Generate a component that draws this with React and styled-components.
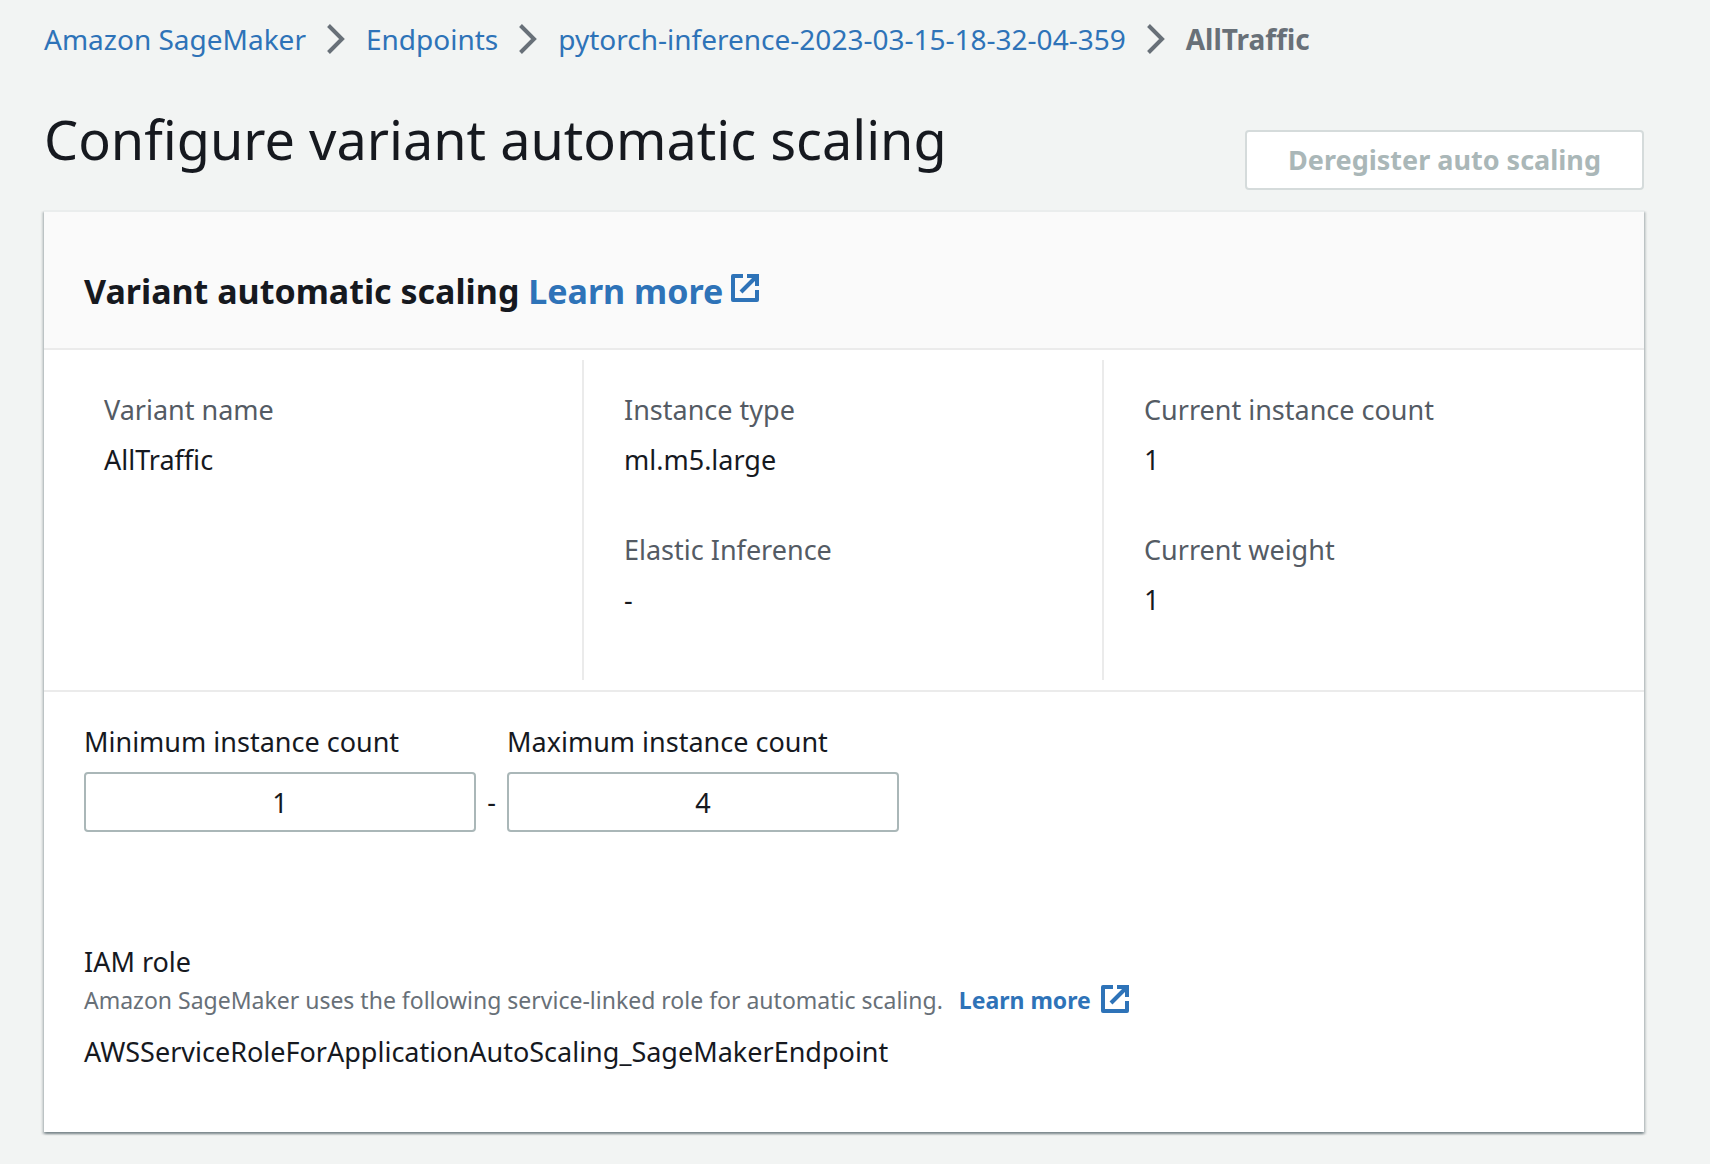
import React, { useState } from "react";
import styled, { createGlobalStyle } from "styled-components";

const GlobalStyle = createGlobalStyle`
  *, *::before, *::after { box-sizing: border-box; }
  body {
    margin: 0;
    background: #f2f4f3;
    color: #16191f;
    font-family: "Noto Sans", "Open Sans", sans-serif;
    font-size: 27px;
    line-height: 44px;
  }
`;

const Page = styled.main`
  padding: 17px 66px 32px 44px;
`;

const Trail = styled.ol`
  display: flex;
  flex-wrap: wrap;
  align-items: center;
  margin: 0;
  padding: 0;
  list-style: none;
  font-size: 28px;
`;

const Crumb = styled.li`
  display: flex;
  align-items: center;
  color: #687078;
  font-weight: ${(p) => (p.$current ? 700 : 400)};
`;

const Link = styled.a`
  color: #2e73b8;
  font-weight: ${(p) => (p.$strong ? 700 : 400)};
  text-decoration: none;
  &:hover { text-decoration: underline; }
`;

const Chevron = styled.svg`
  width: 18px;
  height: 30px;
  margin: 0 21px;
  flex: none;
`;

const TitleRow = styled.header`
  display: flex;
  justify-content: space-between;
  align-items: flex-end;
  padding: 43px 0 20px;
`;

const Title = styled.h1`
  margin: 0 0 16px;
  font-size: 54px;
  font-weight: 400;
  line-height: 70px;
`;

const Button = styled.button`
  height: 60px;
  padding: 0 41px;
  border: 2px solid #d5dbdb;
  border-radius: 4px;
  background: #fff;
  color: #aab7b8;
  font: inherit;
  font-weight: 700;
`;

const Card = styled.section`
  background: #fff;
  border-top: 2px solid #eaeded;
  box-shadow:
    0 2px 2px rgba(0, 28, 36, 0.3),
    2px 2px 2px rgba(0, 28, 36, 0.15),
    -2px 2px 2px rgba(0, 28, 36, 0.15);
`;

const CardHeader = styled.div`
  padding: 54px 40px 32px;
  background: #fafafa;
  border-bottom: 2px solid #ebebeb;
`;

const CardTitle = styled.h2`
  margin: 0;
  font-size: 34px;
  font-weight: 700;
  line-height: 50px;
`;

const ExternalIcon = styled.svg`
  width: 28px;
  height: 28px;
  margin-left: ${(p) => p.$gap}px;
  vertical-align: ${(p) => p.$drop}px;
`;

const Columns = styled.div`
  display: grid;
  grid-template-columns: repeat(3, 1fr);
  padding: 10px 20px;
  border-bottom: 2px solid #ebebeb;
`;

const Column = styled.dl`
  display: flex;
  flex-direction: column;
  gap: 46px;
  margin: 0;
  padding: 28px 40px 58px;
  border-right: 2px solid #ebebeb;
  &:last-child { border-right-color: transparent; }
`;

const Pair = styled.div`
  display: grid;
  gap: 6px;
`;

const Term = styled.dt`
  color: #545b64;
`;

const Value = styled.dd`
  margin: 0;
`;

const Form = styled.form`
  padding: 28px 40px 58px;
`;

const Range = styled.div`
  display: flex;
  align-items: flex-end;
`;

const Field = styled.div`
  display: grid;
  gap: 8px;
  flex: 0 1 392px;
  min-width: 0;
`;

const NumberInput = styled.input`
  width: 100%;
  height: 60px;
  padding: 0 20px;
  border: 2px solid #aab7b8;
  border-radius: 4px;
  background: #fff;
  color: inherit;
  font: inherit;
  text-align: center;
`;

const Dash = styled.span`
  flex: 0 0 31px;
  line-height: 60px;
  text-align: center;
`;

const Role = styled.div`
  margin-top: 108px;
`;

const Hint = styled.p`
  margin: 0 0 14px;
  color: #687078;
  font-size: 23px;
  line-height: 32px;
`;

const HintLink = styled(Link)`
  margin-left: 10px;
`;

const Text = styled.p`
  margin: 0;
  overflow-wrap: anywhere;
`;

function Separator() {
  return (
    <Chevron viewBox="0 0 18 30" aria-hidden="true">
      <path d="M1.5 1.5 L15 15 L1.5 28.5" fill="none" stroke="#687078" strokeWidth="4" />
    </Chevron>
  );
}

function External({ gap, drop }) {
  return (
    <ExternalIcon viewBox="0 0 28 28" $gap={gap} $drop={drop} aria-hidden="true">
      <g fill="none" stroke="#2e73b8" strokeWidth="4">
        <path d="M12 2H2V26H26V16" strokeLinejoin="round" />
        <path d="M16 2H26V12" />
        <path d="M26 2L10 18" />
      </g>
    </ExternalIcon>
  );
}

const crumbs = ["Amazon SageMaker", "Endpoints", "pytorch-inference-2023-03-15-18-32-04-359"];

const columns = [
  [["Variant name", "AllTraffic"]],
  [["Instance type", "ml.m5.large"], ["Elastic Inference", "-"]],
  [["Current instance count", "1"], ["Current weight", "1"]],
];

export default function App() {
  const [min, setMin] = useState("1");
  const [max, setMax] = useState("4");

  return (
    <>
      <GlobalStyle />
      <Page>
        <nav aria-label="Breadcrumb">
          <Trail>
            {crumbs.map((name) => (
              <Crumb key={name}>
                <Link href="#">{name}</Link>
                <Separator />
              </Crumb>
            ))}
            <Crumb $current aria-current="page">AllTraffic</Crumb>
          </Trail>
        </nav>

        <TitleRow>
          <Title>Configure variant automatic scaling</Title>
          <Button type="button" disabled>Deregister auto scaling</Button>
        </TitleRow>

        <Card>
          <CardHeader>
            <CardTitle>
              Variant automatic scaling{" "}
              <Link href="#" $strong>
                Learn more
                <External gap={8} drop={2} />
              </Link>
            </CardTitle>
          </CardHeader>

          <Columns>
            {columns.map((pairs) => (
              <Column key={pairs[0][0]}>
                {pairs.map(([term, value]) => (
                  <Pair key={term}>
                    <Term>{term}</Term>
                    <Value>{value}</Value>
                  </Pair>
                ))}
              </Column>
            ))}
          </Columns>

          <Form>
            <Range>
              <Field>
                <label htmlFor="min-count">Minimum instance count</label>
                <NumberInput id="min-count" inputMode="numeric" value={min} onChange={(e) => setMin(e.target.value)} />
              </Field>
              <Dash>-</Dash>
              <Field>
                <label htmlFor="max-count">Maximum instance count</label>
                <NumberInput id="max-count" inputMode="numeric" value={max} onChange={(e) => setMax(e.target.value)} />
              </Field>
            </Range>

            <Role>
              <Text>IAM role</Text>
              <Hint>
                Amazon SageMaker uses the following service-linked role for automatic scaling.{" "}
                <HintLink href="#" $strong>
                  Learn more
                  <External gap={10} drop={-4} />
                </HintLink>
              </Hint>
              <Text>AWSServiceRoleForApplicationAutoScaling_SageMakerEndpoint</Text>
            </Role>
          </Form>
        </Card>
      </Page>
    </>
  );
}
